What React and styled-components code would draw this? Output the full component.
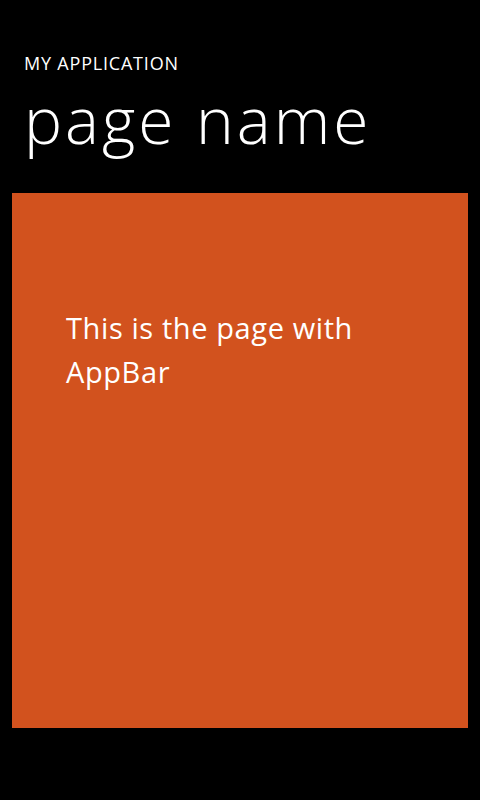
import React from 'react'
import styled, { createGlobalStyle } from 'styled-components'

const GlobalStyle = createGlobalStyle`
  html, body {
    margin: 0;
    padding: 0;
    background: #000;
  }
  body {
    font-family: "Open Sans", "Noto Sans", sans-serif;
    color: #fff;
  }
`

const Page = styled.div`
  width: 480px;
  height: 800px;
  background: #000;
  display: flex;
  flex-direction: column;
`

const TitlePanel = styled.header`
  flex: 0 0 193px;
  padding: 50px 0 0 24px;
  box-sizing: border-box;
`

const AppTitle = styled.div`
  font-size: 18px;
  line-height: 26px;
  letter-spacing: 0.8px;
  text-transform: uppercase;
`

const PageTitle = styled.h1`
  margin: 0;
  font-size: 64px;
  font-weight: 300;
  line-height: 88px;
  letter-spacing: 3px;
`

const ContentPanel = styled.main`
  flex: 0 0 535px;
  margin: 0 12px;
  background: #d2521e;
  padding: 113px 54px 0;
  box-sizing: border-box;
`

const Message = styled.p`
  margin: 0;
  max-width: 310px;
  font-size: 29px;
  line-height: 44px;
  letter-spacing: 0.6px;
`

export default function App() {
  return (
    <Page>
      <GlobalStyle />
      <TitlePanel>
        <AppTitle>My application</AppTitle>
        <PageTitle>page name</PageTitle>
      </TitlePanel>
      <ContentPanel>
        <Message>This is the page with AppBar</Message>
      </ContentPanel>
    </Page>
  )
}
